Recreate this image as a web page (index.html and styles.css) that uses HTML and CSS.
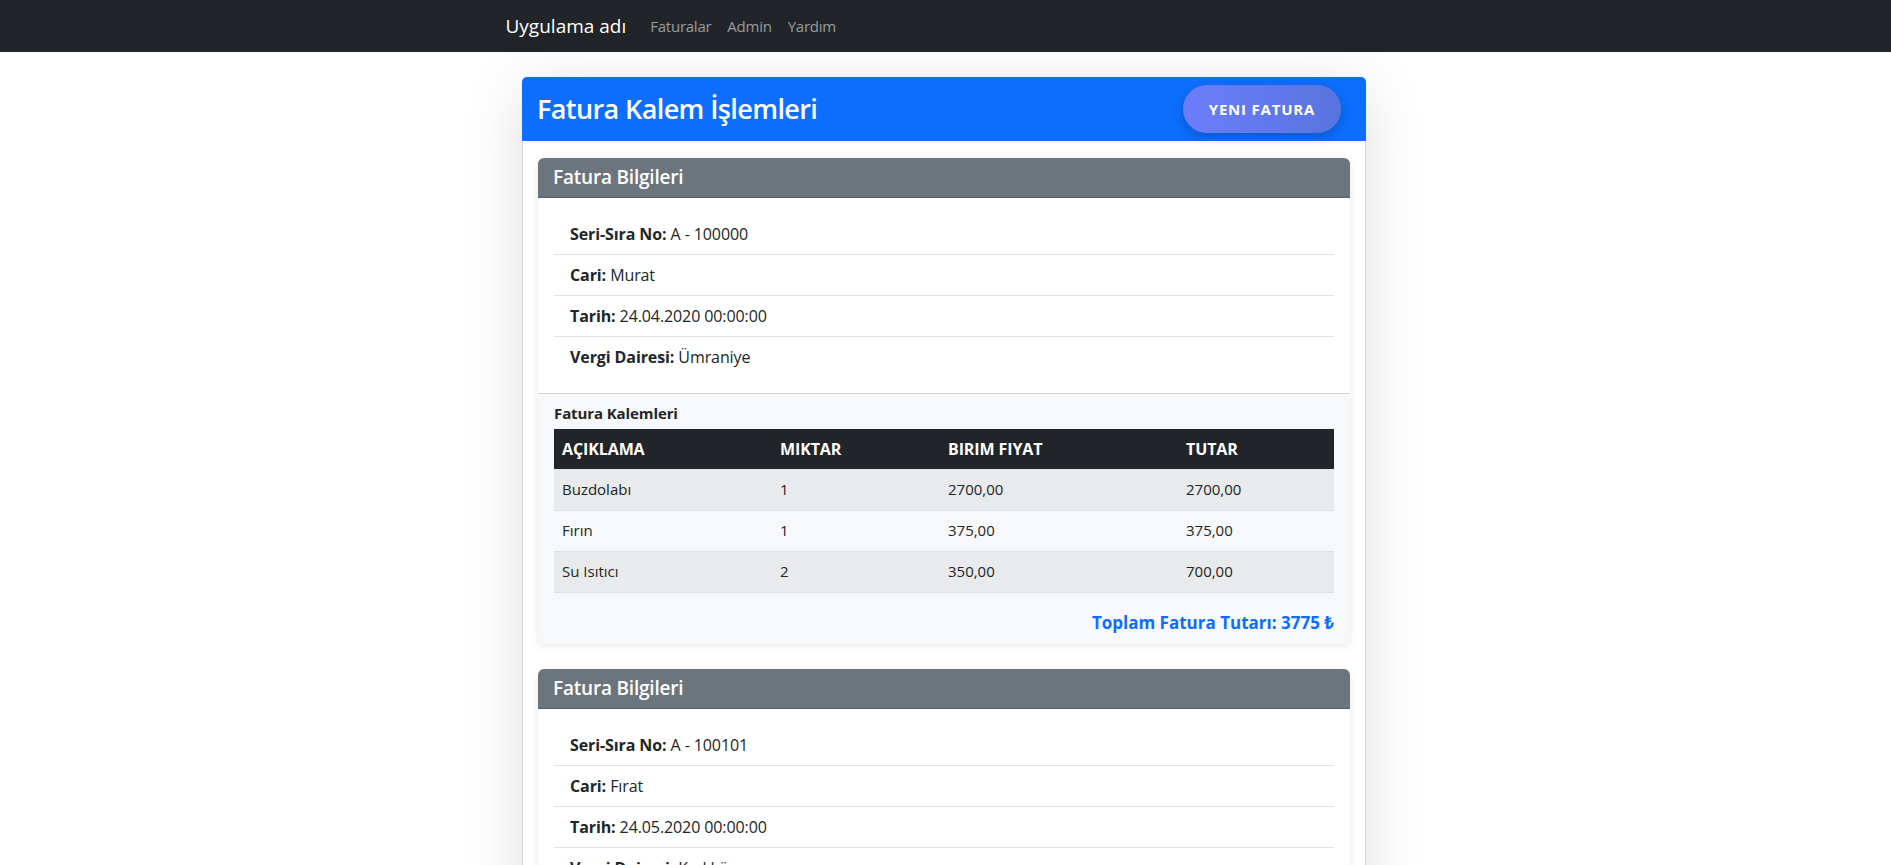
FILE: index.html
```html
<!DOCTYPE html>
<html lang="tr">
<head>
<meta charset="utf-8">
<title>Fatura Kalem İşlemleri</title>
<link rel="stylesheet" href="styles.css">
</head>
<body>
<nav class="navbar">
  <div class="nav-container">
    <a class="brand" href="#">Uygulama adı</a>
    <a class="nav-link" href="#">Faturalar</a>
    <a class="nav-link" href="#">Admin</a>
    <a class="nav-link" href="#">Yardım</a>
  </div>
</nav>

<main class="main">
  <section class="outer-card">
    <header class="outer-header">
      <h3 class="page-title">Fatura Kalem İşlemleri</h3>
      <button class="btn-new">YENI FATURA</button>
    </header>
    <div class="outer-body">

      <article class="invoice">
        <div class="invoice-header">Fatura Bilgileri</div>
        <div class="invoice-body">
          <ul class="info-list">
            <li class="info-item"><b>Seri-Sıra No:</b> A - 100000</li>
            <li class="info-item"><b>Cari:</b> Murat</li>
            <li class="info-item"><b>Tarih:</b> 24.04.2020 00:00:00</li>
            <li class="info-item"><b>Vergi Dairesi:</b> Ümraniye</li>
          </ul>
        </div>
        <div class="invoice-footer">
          <h6 class="items-title">Fatura Kalemleri</h6>
          <table class="items-table">
            <thead>
              <tr><th class="c1">AÇIKLAMA</th><th class="c2">MIKTAR</th><th class="c3">BIRIM FIYAT</th><th class="c4">TUTAR</th></tr>
            </thead>
            <tbody>
              <tr><td>Buzdolabı</td><td>1</td><td>2700,00</td><td>2700,00</td></tr>
              <tr><td>Fırın</td><td>1</td><td>375,00</td><td>375,00</td></tr>
              <tr><td>Su Isıtıcı</td><td>2</td><td>350,00</td><td>700,00</td></tr>
            </tbody>
          </table>
          <div class="total">Toplam Fatura Tutarı: 3775 ₺</div>
        </div>
      </article>

      <article class="invoice">
        <div class="invoice-header">Fatura Bilgileri</div>
        <div class="invoice-body">
          <ul class="info-list">
            <li class="info-item"><b>Seri-Sıra No:</b> A - 100101</li>
            <li class="info-item"><b>Cari:</b> Fırat</li>
            <li class="info-item"><b>Tarih:</b> 24.05.2020 00:00:00</li>
            <li class="info-item"><b>Vergi Dairesi:</b> Kadıköy</li>
          </ul>
        </div>
        <div class="invoice-footer">
          <h6 class="items-title">Fatura Kalemleri</h6>
          <table class="items-table">
            <thead>
              <tr><th class="c1">AÇIKLAMA</th><th class="c2">MIKTAR</th><th class="c3">BIRIM FIYAT</th><th class="c4">TUTAR</th></tr>
            </thead>
            <tbody>
              <tr><td>Televizyon</td><td>1</td><td>4500,00</td><td>4500,00</td></tr>
              <tr><td>Ütü</td><td>2</td><td>250,00</td><td>500,00</td></tr>
            </tbody>
          </table>
          <div class="total">Toplam Fatura Tutarı: 5000 ₺</div>
        </div>
      </article>

    </div>
  </section>
</main>
</body>
</html>
```

FILE: styles.css
```css
* { box-sizing: border-box; }

body {
  margin: 0;
  background: #fff;
  font-family: "Open Sans", "Noto Sans", sans-serif;
  font-size: 16px;
  line-height: 1.5;
  color: #212529;
}

.navbar {
  background: #212529;
  height: 52px;
}

.nav-container {
  width: 880px;
  height: 100%;
  margin: 0 auto;
  display: flex;
  align-items: center;
}

.brand {
  color: #fff;
  font-size: 19px;
  text-decoration: none;
  margin-right: 16px;
}

.nav-link {
  color: rgba(255, 255, 255, 0.55);
  text-decoration: none;
  font-size: 15px;
  letter-spacing: -0.25px;
  padding: 0 8px;
}

.main {
  padding-top: 25px;
  padding-bottom: 40px;
  padding-right: 3px;
}

.outer-card {
  width: 844px;
  margin: 0 auto;
  border: 1px solid #dcdcdc;
  border-radius: 6px;
  box-shadow: 0 10px 60px rgba(0, 0, 0, 0.13);
  background: #fff;
}

.outer-header {
  background: #0d6efd;
  height: 64px;
  border-radius: 5px 5px 0 0;
  display: flex;
  align-items: center;
  justify-content: space-between;
  padding: 0 25px 0 15px;
  margin: -1px -1px 0 -1px;
}

.page-title {
  margin: 0;
  color: #fff;
  font-size: 27px;
  font-weight: 600;
  letter-spacing: -0.6px;
}

.btn-new {
  width: 158px;
  height: 48px;
  border: none;
  border-radius: 24px;
  background: linear-gradient(90deg, #6c7dfa, #5874de);
  color: #fff;
  font-family: inherit;
  font-size: 15px;
  font-weight: 700;
  letter-spacing: 0.8px;
  box-shadow: 0 4px 12px rgba(0, 0, 0, 0.2);
}

.outer-body {
  padding: 17px 15px 16px;
}

.invoice {
  border-radius: 6px;
  overflow: hidden;
  box-shadow: 0 2px 8px rgba(0, 0, 0, 0.09);
  margin-bottom: 25px;
  background: #fff;
}

.invoice-header {
  background: #6c757d;
  height: 40px;
  border-bottom: 1px solid rgba(0, 0, 0, 0.2);
  color: #fff;
  font-size: 19px;
  font-weight: 600;
  letter-spacing: -0.2px;
  display: flex;
  align-items: center;
  padding: 0 15px;
}

.invoice-body {
  padding: 16px;
}

.info-list {
  list-style: none;
  margin: 0;
  padding: 0;
}

.info-item {
  padding: 8px 16px;
  border-bottom: 1px solid #dee2e6;
  font-size: 16px;
  line-height: 24px;
  letter-spacing: -0.1px;
}

.info-item:last-child {
  border-bottom: none;
}

.invoice-footer {
  background: #f7f8fa;
  border-top: 1px solid #d3d3d3;
  padding: 9px 16px 9px;
}

.items-title {
  margin: 0 0 6px;
  font-size: 15px;
  font-weight: 700;
  line-height: 20px;
  letter-spacing: -0.1px;
}

.items-table {
  width: 100%;
  border-collapse: collapse;
  font-size: 15px;
}

.items-table th {
  background: #212529;
  color: #fff;
  text-align: left;
  font-weight: 700;
  font-size: 16px;
  letter-spacing: -0.1px;
  height: 40px;
  padding: 0 8px;
}

.items-table td {
  height: 41px;
  padding: 0 8px;
  border-bottom: 1px solid #dee2e6;
}

.items-table tbody tr:nth-child(odd) td {
  background: #e9eaec;
}

.c1 { width: 218px; }
.c2 { width: 168px; }
.c3 { width: 238px; }
.c4 { width: 156px; }

.total {
  margin-top: 18px;
  text-align: right;
  color: #0d6efd;
  font-size: 17px;
  font-weight: 700;
  line-height: 24px;
}
```
